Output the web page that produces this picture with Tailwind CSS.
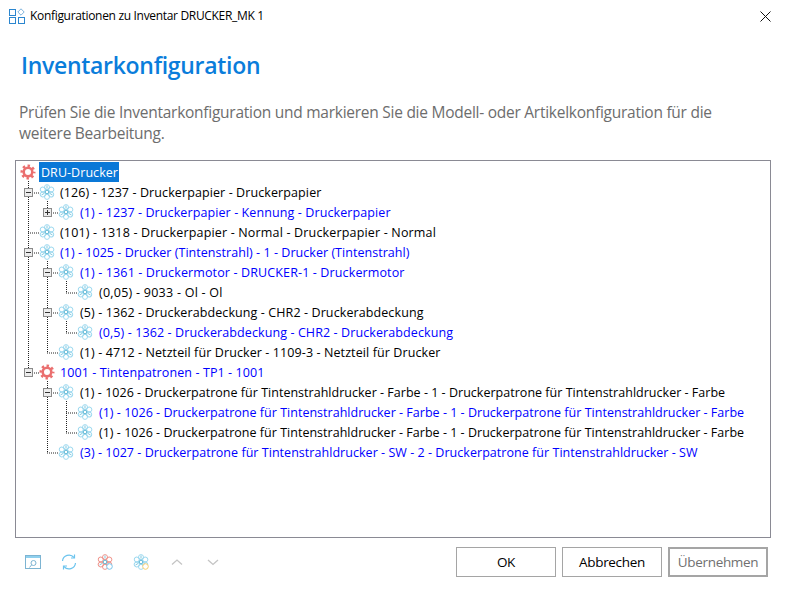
<!DOCTYPE html>
<html lang="de">
<head>
<meta charset="UTF-8">
<title>Konfigurationen zu Inventar DRUCKER_MK 1</title>
<script src="https://cdn.jsdelivr.net/npm/@tailwindcss/browser@4"></script>
</head>
<body class="bg-white w-[786px] h-[593px] overflow-hidden font-['Open_Sans','Noto_Sans',sans-serif] text-black">

<svg width="0" height="0" class="absolute">
  <defs>
    <g id="flower" fill="none" stroke-width="0.9">
      <g stroke="currentColor">
        <circle cx="8" cy="3.100" r="2.500"/>
        <circle cx="8" cy="3.100" r="2.500" transform="rotate(60 8 8)"/>
        <circle cx="8" cy="3.100" r="2.500" transform="rotate(120 8 8)"/>
        <circle cx="8" cy="3.100" r="2.500" transform="rotate(180 8 8)"/>
        <circle cx="8" cy="3.100" r="2.500" transform="rotate(240 8 8)"/>
        <circle cx="8" cy="3.100" r="2.500" transform="rotate(300 8 8)"/>
      </g>
      <circle cx="8" cy="8" r="1.800" stroke="#4fb0d0"/>
      <path d="M8 1.500v3M13.500 11l-2.500-1.500M2.500 11L5 9.500" stroke="#4fb0d0" stroke-width="0.700"/>
    </g>
    <g id="gear" fill="none">
      <circle cx="8" cy="8" r="4.300" stroke="#ea6f6f" stroke-width="2.600"/>
      <circle cx="8" cy="8" r="6.300" stroke="#ea6f6f" stroke-width="2.400" stroke-dasharray="2.450 2.498" stroke-dashoffset="1.200"/>
    </g>
  </defs>
</svg>

<header class="h-[32px] flex items-center pl-[9px] pr-[15px]">
  <svg class="w-[16px] h-[16px] mr-[5px] shrink-0" viewBox="0 0 16 16" fill="none" stroke="#2b86cf" stroke-width="1">
    <rect x="0.500" y="1.500" width="6" height="6"/>
    <rect x="0.500" y="9.500" width="6" height="6"/>
    <rect x="9.500" y="9.500" width="6" height="6"/>
    <path d="M12 0.800l3.200 3.200-3.200 3.200-3.200-3.200z" stroke="#7fb3dc"/>
  </svg>
  <span class="text-[12px] tracking-[-0.32px] leading-none">Konfigurationen zu Inventar DRUCKER_MK 1</span>
  <svg class="ml-auto w-[11px] h-[11px]" viewBox="0 0 11 11" stroke="#111" stroke-width="1" fill="none"><path d="M.5.500l10 10M10.500.500l-10 10"/></svg>
</header>

<main class="px-[15px]">
  <h1 class="mt-[15px] ml-[6px] h-[37px] text-[23px] leading-[37px] font-semibold text-[#0a7ddb] tracking-[-0.3px]">Inventarkonfiguration</h1>
  <p class="mt-[18px] ml-[4px] text-[15.500px] leading-[21px] text-[#6d6d6d] tracking-[-0.26px]">Prüfen Sie die Inventarkonfiguration und markieren Sie die Modell- oder Artikelkonfiguration für die<br>weitere Bearbeitung.</p>

  <section class="relative mt-[16px] w-[756px] h-[378px] border border-[#8a8a94] pt-[1px] text-[12.500px] tracking-[0.1px] leading-[20px] overflow-hidden [&_span]:pt-[2px]">
    <svg class="absolute left-0 top-[1px] w-[754px] h-[376px]" fill="none" stroke="#222" stroke-dasharray="1 1">
      <path d="M12.500 19V211M31.500 39V51M31.500 99V191M31.500 219V291M50.500 119V131M50.500 159V171M50.500 239V271"/>
      <path d="M12 31H24M31 51H43M12 71H24M12 91H24M31 111H43M50 131H62M31 151H43M50 171H62M31 191H43M12 211H24M31 231H43M50 251H62M50 271H62M31 291H43"/>
    </svg>
    <div class="relative">
      <div class="h-[20px] flex items-center pl-[4px]"><svg class="w-[16px] h-[16px] shrink-0" viewBox="0 0 16 16"><use href="#gear"/></svg><span class="ml-[3px] pl-[2px] w-[80px] h-[20px] leading-[18px] bg-[#0a78d7] text-white tracking-[0.05px]">DRU-Drucker</span></div>
      <div class="h-[20px] flex items-center pl-[23px]"><svg class="w-[16px] h-[16px] shrink-0 text-[#96d6ee]" viewBox="0 0 16 16"><use href="#flower"/></svg><span class="ml-[5px]">(126) - 1237 - Druckerpapier - Druckerpapier</span></div>
      <div class="h-[20px] flex items-center pl-[42px]"><svg class="w-[16px] h-[16px] shrink-0 text-[#96d6ee]" viewBox="0 0 16 16"><use href="#flower"/></svg><span class="ml-[6px] text-[#0000ff]">(1) - 1237 - Druckerpapier - Kennung - Druckerpapier</span></div>
      <div class="h-[20px] flex items-center pl-[23px]"><svg class="w-[16px] h-[16px] shrink-0 text-[#96d6ee]" viewBox="0 0 16 16"><use href="#flower"/></svg><span class="ml-[5px] tracking-[0.17px]">(101) - 1318 - Druckerpapier - Normal - Druckerpapier - Normal</span></div>
      <div class="h-[20px] flex items-center pl-[23px]"><svg class="w-[16px] h-[16px] shrink-0 text-[#96d6ee]" viewBox="0 0 16 16"><use href="#flower"/></svg><span class="ml-[5px] text-[#0000ff] tracking-[0.04px]">(1) - 1025 - Drucker (Tintenstrahl) - 1 - Drucker (Tintenstrahl)</span></div>
      <div class="h-[20px] flex items-center pl-[42px]"><svg class="w-[16px] h-[16px] shrink-0 text-[#96d6ee]" viewBox="0 0 16 16"><use href="#flower"/></svg><span class="ml-[6px] text-[#0000ff] tracking-[0.13px]">(1) - 1361 - Druckermotor - DRUCKER-1 - Druckermotor</span></div>
      <div class="h-[20px] flex items-center pl-[61px]"><svg class="w-[16px] h-[16px] shrink-0 text-[#96d6ee]" viewBox="0 0 16 16"><use href="#flower"/></svg><span class="ml-[6px] tracking-[0.25px]">(0,05) - 9033 - Ol - Ol</span></div>
      <div class="h-[20px] flex items-center pl-[42px]"><svg class="w-[16px] h-[16px] shrink-0 text-[#96d6ee]" viewBox="0 0 16 16"><use href="#flower"/></svg><span class="ml-[6px]">(5) - 1362 - Druckerabdeckung - CHR2 - Druckerabdeckung</span></div>
      <div class="h-[20px] flex items-center pl-[61px]"><svg class="w-[16px] h-[16px] shrink-0 text-[#96d6ee]" viewBox="0 0 16 16"><use href="#flower"/></svg><span class="ml-[6px] text-[#0000ff]">(0,5) - 1362 - Druckerabdeckung - CHR2 - Druckerabdeckung</span></div>
      <div class="h-[20px] flex items-center pl-[42px]"><svg class="w-[16px] h-[16px] shrink-0 text-[#96d6ee]" viewBox="0 0 16 16"><use href="#flower"/></svg><span class="ml-[6px]">(1) - 4712 - Netzteil für Drucker - 1109-3 - Netzteil für Drucker</span></div>
      <div class="h-[20px] flex items-center pl-[23px]"><svg class="w-[16px] h-[16px] shrink-0" viewBox="0 0 16 16"><use href="#gear"/></svg><span class="ml-[5px] text-[#0000ff]">1001 - Tintenpatronen - TP1 - 1001</span></div>
      <div class="h-[20px] flex items-center pl-[42px]"><svg class="w-[16px] h-[16px] shrink-0 text-[#96d6ee]" viewBox="0 0 16 16"><use href="#flower"/></svg><span class="ml-[6px] tracking-[0.02px]">(1) - 1026 - Druckerpatrone für Tintenstrahldrucker - Farbe - 1 - Druckerpatrone für Tintenstrahldrucker - Farbe</span></div>
      <div class="h-[20px] flex items-center pl-[61px]"><svg class="w-[16px] h-[16px] shrink-0 text-[#96d6ee]" viewBox="0 0 16 16"><use href="#flower"/></svg><span class="ml-[6px] text-[#0000ff] tracking-[0.02px]">(1) - 1026 - Druckerpatrone für Tintenstrahldrucker - Farbe - 1 - Druckerpatrone für Tintenstrahldrucker - Farbe</span></div>
      <div class="h-[20px] flex items-center pl-[61px]"><svg class="w-[16px] h-[16px] shrink-0 text-[#96d6ee]" viewBox="0 0 16 16"><use href="#flower"/></svg><span class="ml-[6px] tracking-[0.02px]">(1) - 1026 - Druckerpatrone für Tintenstrahldrucker - Farbe - 1 - Druckerpatrone für Tintenstrahldrucker - Farbe</span></div>
      <div class="h-[20px] flex items-center pl-[42px]"><svg class="w-[16px] h-[16px] shrink-0 text-[#96d6ee]" viewBox="0 0 16 16"><use href="#flower"/></svg><span class="ml-[6px] text-[#0000ff] tracking-[0.04px]">(3) - 1027 - Druckerpatrone für Tintenstrahldrucker - SW - 2 - Druckerpatrone für Tintenstrahldrucker - SW</span></div>
    </div>
    <svg class="absolute left-0 top-[1px] w-[754px] h-[376px]" fill="#ececec" stroke="#8a8a8a">
      <rect x="8.500" y="26.500" width="8" height="8"/><path d="M10 30.500h5" stroke="#333"/>
      <rect x="27.500" y="46.500" width="8" height="8"/><path d="M29 50.500h5M31.500 48v5" stroke="#333"/>
      <rect x="8.500" y="86.500" width="8" height="8"/><path d="M10 90.500h5" stroke="#333"/>
      <rect x="27.500" y="106.500" width="8" height="8"/><path d="M29 110.500h5" stroke="#333"/>
      <rect x="27.500" y="146.500" width="8" height="8"/><path d="M29 150.500h5" stroke="#333"/>
      <rect x="8.500" y="206.500" width="8" height="8"/><path d="M10 210.500h5" stroke="#333"/>
      <rect x="27.500" y="226.500" width="8" height="8"/><path d="M29 230.500h5" stroke="#333"/>
    </svg>
  </section>

  <footer class="mt-[9px] h-[30px] flex items-center">
    <div class="flex items-center gap-[20px] pl-[10px]">
      <svg class="w-[16px] h-[16px]" viewBox="0 0 16 16" fill="none" stroke="#7db4d2"><rect x="0.500" y="1.500" width="15" height="13"/><path d="M1 2.500h14M1 3.500h14" stroke="#8fd0ee"/><circle cx="8.500" cy="9" r="2.500"/><path d="M6.500 11l-2 2.500"/></svg>
      <svg class="w-[16px] h-[16px]" viewBox="0 0 16 16" fill="none" stroke="#6cc4ee" stroke-width="1.200"><path d="M1.500 7a6.500 6.500 0 0 1 11.500-3.500M14.500 9a6.500 6.500 0 0 1-11.500 3.500"/><path d="M13.500.500v3.500h-3.500M2.500 15.500v-3.500h3.500"/></svg>
      <svg class="w-[16px] h-[16px] text-[#ee8d84]" viewBox="0 0 16 16"><use href="#flower"/><circle cx="12.500" cy="12.500" r="2.800" fill="#fff" stroke="#78c4ec"/></svg>
      <svg class="w-[16px] h-[16px] text-[#96d6ee]" viewBox="0 0 16 16"><use href="#flower"/><circle cx="12.500" cy="12.500" r="2.800" fill="#fff" stroke="#f6cf6e"/></svg>
      <svg class="w-[16px] h-[16px]" viewBox="0 0 16 16" fill="none" stroke="#c4c4c4" stroke-width="1.300"><path d="M3 10.500l5-4.500 5 4.500"/></svg>
      <svg class="w-[16px] h-[16px]" viewBox="0 0 16 16" fill="none" stroke="#c4c4c4" stroke-width="1.300"><path d="M3 6l5 4.500 5-4.500"/></svg>
    </div>
    <div class="ml-auto flex gap-[6px] text-[13.500px] tracking-[-0.33px] pr-[3px]">
      <button class="w-[100px] h-[30px] border border-[#a5a5a5] bg-white">OK</button>
      <button class="w-[100px] h-[30px] border border-[#a5a5a5] bg-white">Abbrechen</button>
      <button class="w-[100px] h-[30px] border-2 border-[#a5a5a5] bg-white text-[#707070]">Übernehmen</button>
    </div>
  </footer>
</main>
</body>
</html>
